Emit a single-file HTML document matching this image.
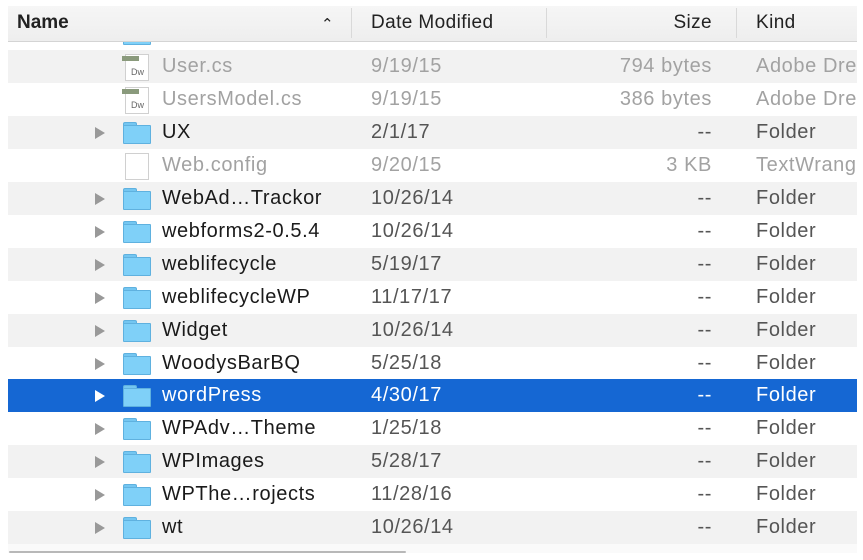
<!DOCTYPE html>
<html><head><style>
body{margin:0;width:863px;height:560px;background:#fff;overflow:hidden;font-family:"Liberation Sans",sans-serif;position:relative}
.hdr{position:absolute;z-index:5;left:8px;top:6px;width:849px;height:35px;background:linear-gradient(#f6f6f6,#eeeeee);border-bottom:1px solid #d4d4d4}
.hdr span{position:absolute;top:6px;font-size:19px;letter-spacing:0.4px;color:#222}
.sep{position:absolute;top:2px;width:1px;height:30px;background:#d9d9d9}
.row{position:absolute;left:8px;width:849px;height:33px;font-size:20px;letter-spacing:0.6px;color:#1a1a1a;overflow:hidden}
.row.g{background:#f2f2f2}
.row.sel{background:#1567d3;color:#fff}
.row span{position:absolute;top:5px;white-space:nowrap}
.n{left:154px}.d{left:363px;color:#555}.s{right:145px;color:#555}.k{left:748px;color:#555}
.dim span{color:#a2a2a2!important}
.sel span{color:#fff!important}
.tri{position:absolute;left:87px;top:11px;width:0;height:0;border-left:10px solid #999;border-top:6px solid transparent;border-bottom:6px solid transparent}
.sel .tri{border-left-color:#fff}
.fold{position:absolute;left:115px;top:6px;width:28px;height:22px}
.fold:before{content:"";position:absolute;left:0;top:0;width:12px;height:4px;background:#74c6f1;border-radius:2px 2px 0 0;border:1px solid #5fb1df;border-bottom:none}
.fold:after{content:"";position:absolute;left:0;top:3px;width:26px;height:17px;background:#7fd0f8;border:1px solid #5fb1df;border-radius:1px}
.file{position:absolute;left:117px;top:4px;width:22px;height:25px;background:#fff;border:1px solid #d0d0d0;font-size:9px;color:#666;letter-spacing:0}
.file i{position:absolute;left:-4px;top:1px;width:17px;height:5px;background:#8a9a7c}
.file b{position:absolute;left:5px;top:12px;font-weight:normal}
</style></head><body>
<div class="hdr">
<span style="left:9px;font-weight:bold;letter-spacing:0">Name</span>
<span style="left:313px;font-size:15px;top:9px">&#8963;</span>
<div class="sep" style="left:343px"></div>
<span style="left:363px">Date Modified</span>
<div class="sep" style="left:538px"></div>
<span style="right:145px">Size</span>
<div class="sep" style="left:728px"></div>
<span style="left:748px">Kind</span>
</div>
<div class="row" style="top:17px;height:29px"><div class="fold" style="top:6px"></div></div>
<div style="position:absolute;left:0;top:46px;width:863px;height:4px;background:#fff"></div>

<div class="row g dim" style="top:50px"><div class="file"><i></i><b>Dw</b></div><span class="n">User.cs</span><span class="d">9/19/15</span><span class="s">794 bytes</span><span class="k">Adobe Dreamweaver</span></div>
<div class="row dim" style="top:83px"><div class="file"><i></i><b>Dw</b></div><span class="n">UsersModel.cs</span><span class="d">9/19/15</span><span class="s">386 bytes</span><span class="k">Adobe Dreamweaver</span></div>
<div class="row g" style="top:116px"><div class="tri"></div><div class="fold"></div><span class="n">UX</span><span class="d">2/1/17</span><span class="s">--</span><span class="k">Folder</span></div>
<div class="row dim" style="top:149px"><div class="file"></div><span class="n">Web.config</span><span class="d">9/20/15</span><span class="s">3 KB</span><span class="k">TextWrangler</span></div>
<div class="row g" style="top:182px"><div class="tri"></div><div class="fold"></div><span class="n">WebAd…Trackor</span><span class="d">10/26/14</span><span class="s">--</span><span class="k">Folder</span></div>
<div class="row" style="top:215px"><div class="tri"></div><div class="fold"></div><span class="n">webforms2-0.5.4</span><span class="d">10/26/14</span><span class="s">--</span><span class="k">Folder</span></div>
<div class="row g" style="top:248px"><div class="tri"></div><div class="fold"></div><span class="n">weblifecycle</span><span class="d">5/19/17</span><span class="s">--</span><span class="k">Folder</span></div>
<div class="row" style="top:281px"><div class="tri"></div><div class="fold"></div><span class="n">weblifecycleWP</span><span class="d">11/17/17</span><span class="s">--</span><span class="k">Folder</span></div>
<div class="row g" style="top:314px"><div class="tri"></div><div class="fold"></div><span class="n">Widget</span><span class="d">10/26/14</span><span class="s">--</span><span class="k">Folder</span></div>
<div class="row" style="top:347px"><div class="tri"></div><div class="fold"></div><span class="n">WoodysBarBQ</span><span class="d">5/25/18</span><span class="s">--</span><span class="k">Folder</span></div>
<div class="row sel" style="top:379px"><div class="tri"></div><div class="fold"></div><span class="n">wordPress</span><span class="d">4/30/17</span><span class="s">--</span><span class="k">Folder</span></div>
<div class="row" style="top:412px"><div class="tri"></div><div class="fold"></div><span class="n">WPAdv…Theme</span><span class="d">1/25/18</span><span class="s">--</span><span class="k">Folder</span></div>
<div class="row g" style="top:445px"><div class="tri"></div><div class="fold"></div><span class="n">WPImages</span><span class="d">5/28/17</span><span class="s">--</span><span class="k">Folder</span></div>
<div class="row" style="top:478px"><div class="tri"></div><div class="fold"></div><span class="n">WPThe…rojects</span><span class="d">11/28/16</span><span class="s">--</span><span class="k">Folder</span></div>
<div class="row g" style="top:511px"><div class="tri"></div><div class="fold"></div><span class="n">wt</span><span class="d">10/26/14</span><span class="s">--</span><span class="k">Folder</span></div>
<div style="position:absolute;left:8px;top:544px;width:849px;height:9px;background:#fafafa"></div>
<div style="position:absolute;left:9px;top:551px;width:397px;height:2px;background:#b8b8b8;border-radius:1px"></div>
</body></html>
